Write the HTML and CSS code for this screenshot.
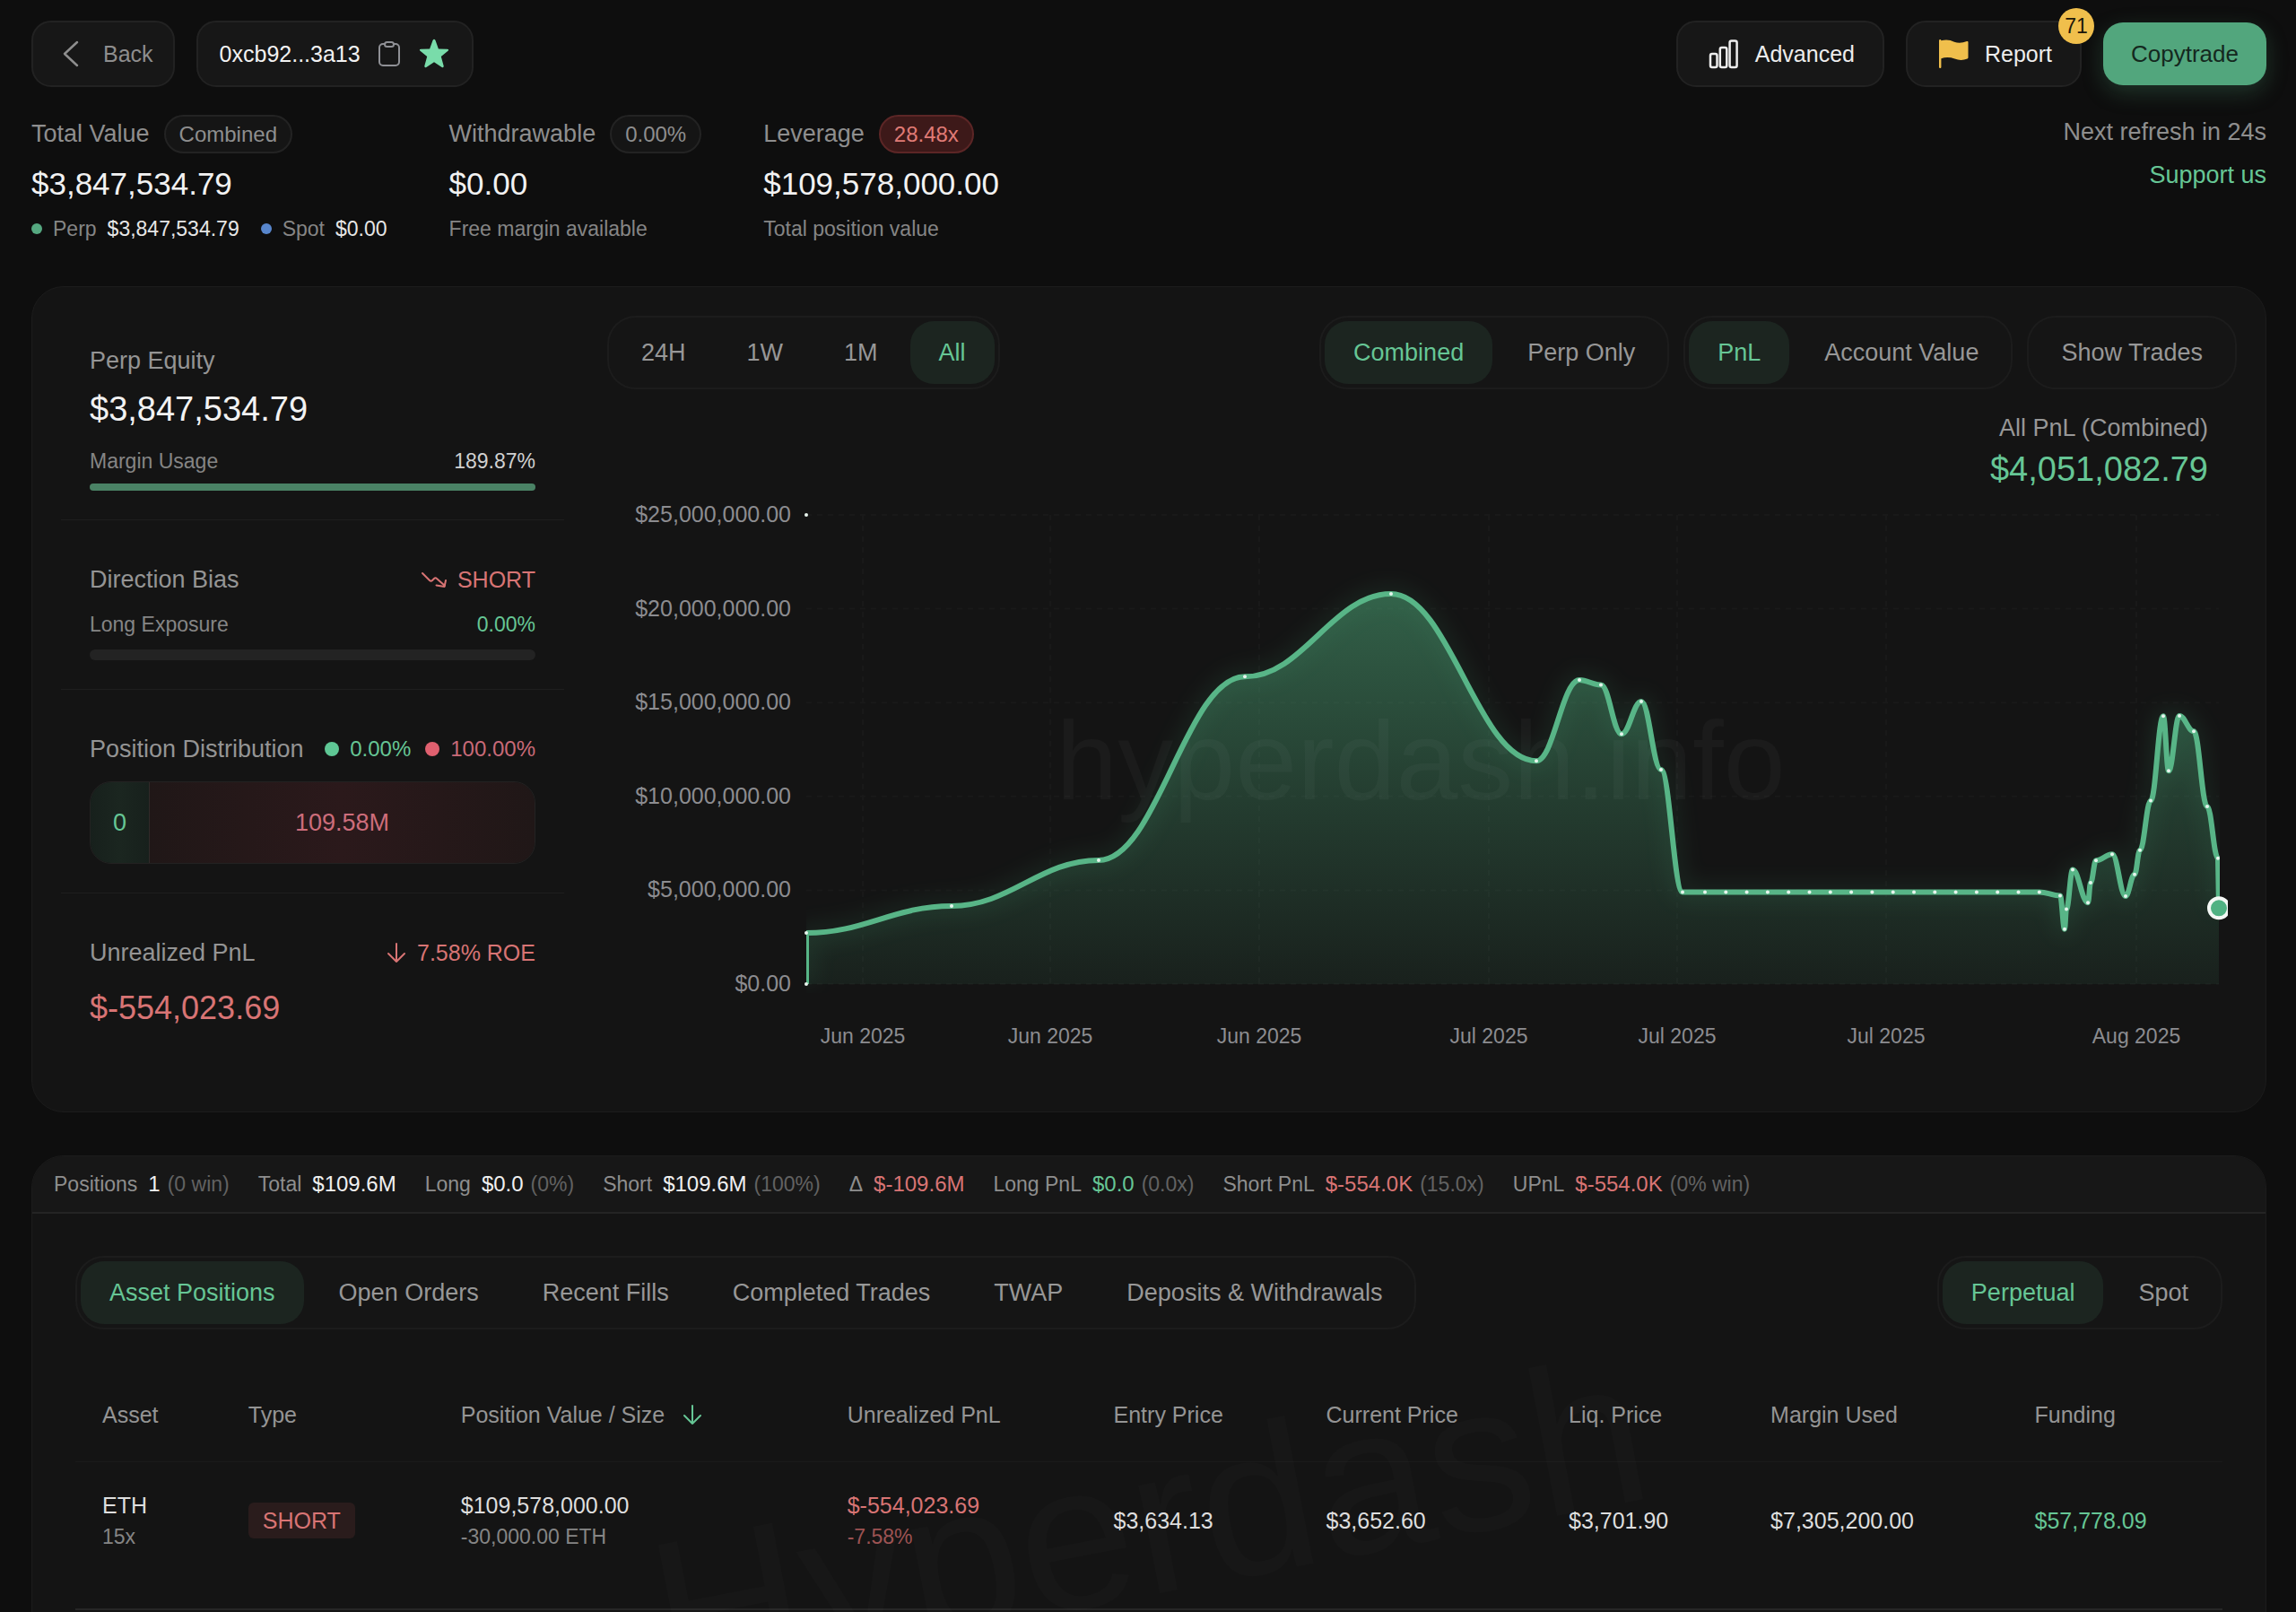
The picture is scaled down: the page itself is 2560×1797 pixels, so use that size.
FILE: index.html
```html
<!DOCTYPE html>
<html lang="en">

<head>
    <meta charset="UTF-8">
    <meta name="viewport" content="width=device-width, initial-scale=1.0">
    <title>Trader 0xcb92...3a13</title>
    <link rel="stylesheet" href="styles.css">
</head>

<body>
    <header class="topbar">
        <div class="topbar-group">
            <button type="button" class="btn btn-back">
                <svg class="icon-32" viewBox="0 0 32 32" fill="none" stroke="currentColor" stroke-width="2.5" stroke-linecap="round" stroke-linejoin="round"><path d="M23 3 9 16l14 13" /></svg>
                Back
            </button>
            <div class="btn address">
                <span>0xcb92...3a13</span>
                <button type="button" class="icon-btn" aria-label="Copy address">
                    <svg class="icon-28" viewBox="0 0 28 28" fill="none" stroke="#8f9095" stroke-width="2"><rect x="3" y="3" width="22" height="24" rx="4" /><rect x="9" y="1" width="10" height="5" rx="2.5" fill="#181818" /></svg>
                </button>
                <button type="button" class="icon-btn" aria-label="Favorite">
                    <svg class="icon-36" viewBox="0 0 36 36" fill="#79dcaa"><path d="M16.500 2.900 L13.100 12.500 L3.200 12.800 Q1 13 2.500 14.700 L10.200 20.900 L7.300 31.600 Q7.200 34 9.300 33 L18 27.200 L26.700 33 Q28.800 34 28.700 31.600 L25.800 20.900 L33.500 14.700 Q35 13 32.800 12.800 L22.900 12.500 L19.500 2.900 Q18 .5 16.500 2.900Z" /></svg>
                </button>
            </div>
        </div>
        <div class="topbar-group">
            <button type="button" class="btn btn-action">
                <svg class="icon-34" viewBox="0 0 34 34" fill="none" stroke="currentColor" stroke-width="2.5"><rect x="2" y="17" width="7.500" height="15" rx="2" /><rect x="12.800" y="10" width="7.500" height="22" rx="2" /><rect x="23.600" y="2.500" width="8" height="29.500" rx="2" /></svg>
                Advanced
            </button>
            <button type="button" class="btn btn-action btn-report">
                <svg class="icon-34" viewBox="0 0 34 34" fill="#f0bf4c"><path d="M1 2.200Q1 1 2.200 1T3.400 2.300Q11 0 18 3.800 25 5.800 32 3 33.500 2.600 33.500 4v17q0 1-1 1.600-7 2.800-14 0Q10.500 19.800 3.400 22.300V32q0 1-1.200 1T1 32Z" /></svg>
                Report
                <span class="badge">71</span>
            </button>
            <button type="button" class="btn-copy">Copytrade</button>
        </div>
    </header>

    <section class="summary">
        <div class="stat">
            <div class="stat-label">Total Value <span class="pill">Combined</span></div>
            <div class="stat-value">$3,847,534.79</div>
            <div class="stat-sub split">
                <span class="key"><i class="dot dot-green"></i>Perp <b>$3,847,534.79</b></span>
                <span class="key"><i class="dot dot-blue"></i>Spot <b>$0.00</b></span>
            </div>
        </div>
        <div class="stat">
            <div class="stat-label">Withdrawable <span class="pill">0.00%</span></div>
            <div class="stat-value">$0.00</div>
            <div class="stat-sub">Free margin available</div>
        </div>
        <div class="stat">
            <div class="stat-label">Leverage <span class="pill pill-red">28.48x</span></div>
            <div class="stat-value">$109,578,000.00</div>
            <div class="stat-sub">Total position value</div>
        </div>
        <div class="refresh">
            <span>Next refresh in 24s</span>
            <a href="#support">Support us</a>
        </div>
    </section>

    <section class="card overview">
        <aside class="side">
            <div class="side-block">
                <div class="side-title">Perp Equity</div>
                <div class="side-value">$3,847,534.79</div>
                <div class="side-row row-usage"><span>Margin Usage</span><span class="light">189.87%</span></div>
                <div class="bar bar-thin"><div class="bar-fill" style="width: 100%"></div></div>
            </div>
            <div class="side-block">
                <div class="side-title">Direction Bias
                    <span class="side-tag red">
                        <svg class="icon-28" viewBox="0 0 28 28" fill="none" stroke="currentColor" stroke-width="2" stroke-linecap="round" stroke-linejoin="round"><path d="M1 7l8 8q1.500 1.500 3 0l2-2q1.500-1.500 3 0l9 8M27 15l-1.500 7-9-1.500" /></svg>
                        SHORT
                    </span>
                </div>
                <div class="side-row row-exposure"><span>Long Exposure</span><span class="green">0.00%</span></div>
                <div class="bar"><div class="bar-fill" style="width: 0%"></div></div>
            </div>
            <div class="side-block">
                <div class="side-title">Position Distribution
                    <span class="legend">
                        <span class="key green"><i class="dot dot-lg dot-mint"></i>0.00%</span>
                        <span class="key rose"><i class="dot dot-lg dot-rose"></i>100.00%</span>
                    </span>
                </div>
                <div class="distribution">
                    <div class="dist-long">0</div>
                    <div class="dist-short">109.58M</div>
                </div>
            </div>
            <div class="side-block">
                <div class="side-title">Unrealized PnL
                    <span class="side-tag red">
                        <svg class="icon-22" viewBox="0 0 22 24" fill="none" stroke="currentColor" stroke-width="2" stroke-linecap="round" stroke-linejoin="round"><path d="M11 2v20M2 13l9 9 9-9" /></svg>
                        7.58% ROE
                    </span>
                </div>
                <div class="side-pnl red">$-554,023.69</div>
            </div>
        </aside>

        <div class="chart">
            <div class="chart-head">
                <div class="tabs tabs-range">
                    <button type="button">24H</button>
                    <button type="button">1W</button>
                    <button type="button">1M</button>
                    <button type="button" class="active">All</button>
                </div>
                <div class="chart-filters">
                    <div class="tabs">
                        <button type="button" class="active">Combined</button>
                        <button type="button">Perp Only</button>
                    </div>
                    <div class="tabs">
                        <button type="button" class="active">PnL</button>
                        <button type="button">Account Value</button>
                    </div>
                    <div class="tabs">
                        <button type="button">Show Trades</button>
                    </div>
                </div>
            </div>
            <div class="chart-total">
                <div class="chart-total-label">All PnL (Combined)</div>
                <div class="chart-total-value">$4,051,082.79</div>
            </div>
            <svg class="chart-svg" id="pnl-chart" viewBox="0 0 1817 660">
                <defs>
                    <linearGradient id="area" gradientUnits="userSpaceOnUse" x1="0" y1="116" x2="0" y2="550">
                        <stop offset="0" stop-color="#52b280" stop-opacity=".48" />
                        <stop offset=".5" stop-color="#52b280" stop-opacity=".27" />
                        <stop offset="1" stop-color="#52b280" stop-opacity=".08" />
                    </linearGradient>
                    <filter id="glow" x="-5%" y="-10%" width="110%" height="120%">
                        <feGaussianBlur stdDeviation="12" />
                    </filter>
                    <clipPath id="plot"><rect x="222" y="20" width="1576" height="540" /></clipPath>
                    <clipPath id="frame"><rect x="0" y="0" width="1807" height="660" /></clipPath>
                </defs>
                <g id="grid" class="grid"></g>
                <path id="pnl-area" fill="url(#area)" />
                <text class="chart-mark" x="907" y="344">hyperdash.info</text>
                <g clip-path="url(#plot)">
                    <path id="pnl-glow" class="glow" filter="url(#glow)" />
                    <path id="pnl-line" class="line" />
                </g>
                <g id="dots" class="dots"></g>
                <g clip-path="url(#frame)"><circle id="current" class="current" r="11" /></g>
                <g id="axis-y" class="axis axis-y"></g>
                <g id="axis-x" class="axis axis-x"></g>
            </svg>
        </div>
    </section>

    <section class="card positions">
        <div class="watermark" aria-hidden="true">Hyperdash</div>
        <div class="totals">
            <span class="total">Positions <b>1</b><small>(0 win)</small></span>
            <span class="total">Total <b>$109.6M</b></span>
            <span class="total">Long <b>$0.0</b><small>(0%)</small></span>
            <span class="total">Short <b>$109.6M</b><small>(100%)</small></span>
            <span class="total">Δ <b class="red">$-109.6M</b></span>
            <span class="total">Long PnL <b class="green">$0.0</b><small>(0.0x)</small></span>
            <span class="total">Short PnL <b class="red">$-554.0K</b><small>(15.0x)</small></span>
            <span class="total">UPnL <b class="red">$-554.0K</b><small>(0% win)</small></span>
        </div>
        <div class="positions-body">
            <div class="positions-head">
                <div class="tabs">
                    <button type="button" class="active">Asset Positions</button>
                    <button type="button">Open Orders</button>
                    <button type="button">Recent Fills</button>
                    <button type="button">Completed Trades</button>
                    <button type="button">TWAP</button>
                    <button type="button">Deposits &amp; Withdrawals</button>
                </div>
                <div class="tabs">
                    <button type="button" class="active">Perpetual</button>
                    <button type="button">Spot</button>
                </div>
            </div>
            <table class="table">
                <colgroup>
                    <col class="col-asset"><col class="col-type"><col class="col-size"><col class="col-upnl"><col class="col-entry"><col class="col-current"><col class="col-liq"><col class="col-margin"><col class="col-funding">
                </colgroup>
                <thead>
                    <tr>
                        <th>Asset</th>
                        <th>Type</th>
                        <th>
                            <span class="sorted">Position Value / Size
                                <svg class="icon-22 green" viewBox="0 0 22 24" fill="none" stroke="currentColor" stroke-width="2" stroke-linecap="round" stroke-linejoin="round"><path d="M11 2v20M2 13l9 9 9-9" /></svg>
                            </span>
                        </th>
                        <th>Unrealized PnL</th>
                        <th>Entry Price</th>
                        <th>Current Price</th>
                        <th>Liq. Price</th>
                        <th>Margin Used</th>
                        <th>Funding</th>
                    </tr>
                </thead>
                <tbody>
                    <tr>
                        <td><div class="cell-main">ETH</div><div class="cell-sub">15x</div></td>
                        <td><span class="tag-short">SHORT</span></td>
                        <td><div class="cell-main">$109,578,000.00</div><div class="cell-sub">-30,000.00 ETH</div></td>
                        <td><div class="cell-main red">$-554,023.69</div><div class="cell-sub dark-red">-7.58%</div></td>
                        <td>$3,634.13</td>
                        <td>$3,652.60</td>
                        <td>$3,701.90</td>
                        <td>$7,305,200.00</td>
                        <td class="green">$57,778.09</td>
                    </tr>
                </tbody>
            </table>
            <div class="table-footer"></div>
        </div>
    </section>

    <script src="chart.js"></script>
</body>

</html>
```
FILE: styles.css
```css
* {
    box-sizing: border-box;
}

body {
    margin: 0;
    padding: 23px 33px 0 35px;
    height: 100vh;
    overflow: hidden;
    background-color: #0e0e0e;
    color: #ededed;
    font-family: "Liberation Sans", Arial, sans-serif;
    font-size: 25px;
}

button {
    font-family: inherit;
    font-size: 25px;
    color: inherit;
    background: none;
    border: none;
    padding: 0;
    cursor: pointer;
}

b,
i,
small {
    font-weight: normal;
    font-style: normal;
    font-size: inherit;
}

svg {
    display: block;
    flex-shrink: 0;
}

.icon-22 { width: 22px; height: 24px; }
.icon-28 { width: 28px; height: 28px; }
.icon-32 { width: 32px; height: 32px; }
.icon-34 { width: 34px; height: 34px; }
.icon-36 { width: 36px; height: 36px; }

.green { color: #66c695; }
.red { color: #d87474; }
.rose { color: #c96a78; }
.dark-red { color: #9c5252; }
.light { color: #d0d0d0; }

/* top bar */
.topbar,
.topbar-group {
    display: flex;
    align-items: center;
    justify-content: space-between;
    gap: 24px;
}

.btn {
    display: flex;
    align-items: center;
    height: 74px;
    border: 2px solid #222;
    border-radius: 22px;
    background-color: #171717;
    white-space: nowrap;
}

.btn-back {
    gap: 20px;
    padding: 0 22px 0 26px;
    color: #8e8e8e;
}

.address {
    gap: 18px;
    padding: 0 24px;
    color: #f2f2f2;
}

.btn-action {
    gap: 18px;
    padding: 0 31px 0 34px;
}

.btn-report {
    position: relative;
}

.badge {
    position: absolute;
    top: -16px;
    right: -16px;
    width: 40px;
    height: 40px;
    border-radius: 50%;
    background-color: #f0bf4c;
    color: #1c1608;
    font-size: 23px;
    line-height: 40px;
    text-align: center;
}

.btn-copy {
    height: 70px;
    padding: 0 31px;
    border-radius: 22px;
    background-color: #52a67d;
    color: #14281e;
    font-size: 26px;
    box-shadow: 0 8px 24px rgba(82, 166, 125, 0.25);
}

/* summary */
.summary {
    display: flex;
    align-items: flex-start;
    gap: 69px;
    margin-top: 31px;
}

.stat {
    display: flex;
    flex-direction: column;
    gap: 15px;
    white-space: nowrap;
}

.stat-label {
    display: flex;
    align-items: center;
    gap: 16px;
    color: #8e8e8e;
    font-size: 27px;
}

.pill {
    height: 43px;
    padding: 0 15px;
    border: 2px solid #232323;
    border-radius: 22px;
    background-color: #151515;
    font-size: 24px;
    line-height: 39px;
}

.pill-red {
    border-color: #5c2626;
    background-color: #3d1919;
    color: #e07b76;
}

.stat-value {
    font-size: 35px;
    line-height: 38px;
    color: #f2f2f2;
}

.stat-sub {
    color: #858585;
    font-size: 23px;
    line-height: 32px;
}

.stat-sub b {
    color: #e6e6e6;
}

.split {
    display: flex;
    gap: 24px;
}

.key {
    display: flex;
    align-items: center;
    gap: 12px;
}

.dot {
    width: 12px;
    height: 12px;
    border-radius: 50%;
}

.dot-lg {
    width: 16px;
    height: 16px;
}

.dot-green { background-color: #55a880; }
.dot-blue { background-color: #5886cc; }
.dot-mint { background-color: #5fc795; }
.dot-rose { background-color: #e0606f; }

.refresh {
    display: flex;
    flex-direction: column;
    align-items: flex-end;
    gap: 10px;
    margin-left: auto;
    color: #8e8e8e;
    font-size: 27px;
    line-height: 38px;
}

.refresh a {
    color: #66c695;
    text-decoration: none;
}

/* cards */
.card {
    margin-top: 48px;
    border: 1px solid #1c1c1c;
    border-radius: 36px;
    background-color: #141414;
}

.overview {
    display: flex;
    gap: 48px;
    padding: 32px;
}

.side {
    display: flex;
    flex-direction: column;
    flex: 0 0 561px;
    gap: 16px;
}

.side-block {
    padding: 32px;
    border-bottom: 1px solid #1e1e1e;
}

.side-block:last-child {
    border-bottom: none;
}

.side-title {
    display: flex;
    align-items: center;
    justify-content: space-between;
    color: #949494;
    font-size: 27px;
    line-height: 36px;
    white-space: nowrap;
}

.side-tag {
    display: flex;
    align-items: center;
    gap: 12px;
    font-size: 25px;
}

.side-value {
    margin-top: 12px;
    font-size: 38px;
    line-height: 48px;
    color: #f2f2f2;
}

.side-pnl {
    margin-top: 20px;
    font-size: 36px;
    line-height: 48px;
}

.side-row {
    display: flex;
    justify-content: space-between;
    color: #858585;
    font-size: 23px;
    line-height: 28px;
}

.row-usage {
    margin: 20px 0 11px;
}

.row-exposure {
    margin: 18px 0 14px;
}

.bar {
    height: 12px;
    border-radius: 6px;
    background-color: #232323;
    overflow: hidden;
}

.bar-thin {
    height: 8px;
}

.bar-fill {
    height: 100%;
    background-color: #4a8265;
}

.legend {
    display: flex;
    gap: 16px;
    font-size: 24px;
}

.distribution {
    display: flex;
    height: 92px;
    margin-top: 18px;
    border: 1px solid #232222;
    border-radius: 24px;
    overflow: hidden;
    font-size: 27px;
    line-height: 90px;
    text-align: center;
}

.dist-long {
    flex: 0 0 66px;
    border-right: 1px solid #302a29;
    background: linear-gradient(90deg, #17201c, #1b2620, #17201c);
    color: #66c695;
}

.dist-short {
    flex: 1;
    background: linear-gradient(90deg, #201717, #2b191b, #201717);
    color: #cd6d7b;
}

/* tabs */
.tabs {
    display: flex;
    gap: 7px;
    padding: 4px;
    border: 2px solid #1c1c1c;
    border-radius: 32px;
    background-color: #151515;
}

.tabs-range {
    gap: 4px;
}

.tabs button {
    height: 70px;
    padding: 0 32px;
    border-radius: 26px;
    color: #979797;
    font-size: 27px;
    white-space: nowrap;
}

.tabs .active {
    background-color: #1c2520;
    color: #66c695;
}

/* chart */
.chart {
    flex: 1;
    min-width: 0;
}

.chart-head,
.positions-head {
    display: flex;
    justify-content: space-between;
}

.chart-filters {
    display: flex;
    gap: 16px;
}

.chart-total {
    margin-top: 25px;
    padding-right: 32px;
    text-align: right;
}

.chart-total-label {
    color: #979797;
    font-size: 27px;
    line-height: 36px;
}

.chart-total-value {
    margin-top: 4px;
    color: #66c695;
    font-size: 38px;
    line-height: 48px;
}

.chart-svg {
    width: 100%;
    height: auto;
}

.grid line {
    stroke: #191919;
    stroke-width: 2;
    stroke-dasharray: 6 6;
}

.line {
    fill: none;
    stroke: #58b587;
    stroke-width: 6;
    stroke-linejoin: round;
}

.glow {
    fill: none;
    stroke: #3f8a66;
    stroke-width: 14;
    opacity: 0.2;
}

.dots {
    fill: #e8f5ee;
}

.current {
    fill: #50b283;
    stroke: #f4f8f5;
    stroke-width: 4;
}

.axis {
    fill: #8c8c90;
    font-size: 25px;
}

.axis-y {
    text-anchor: end;
}

.axis-x {
    font-size: 23px;
    text-anchor: middle;
}

.chart-mark {
    fill: rgba(255, 255, 255, 0.03);
    font-size: 124px;
    text-anchor: middle;
}

/* positions */
.positions {
    position: relative;
    border-radius: 36px 36px 0 0;
    overflow: hidden;
}

.watermark {
    position: absolute;
    top: 408px;
    left: 50%;
    color: rgba(255, 255, 255, 0.016);
    font-size: 232px;
    line-height: 1;
    transform: translate(-50%, -50%) rotate(-11deg);
    pointer-events: none;
}

.totals {
    display: flex;
    gap: 32px;
    padding: 0 24px;
    border-bottom: 2px solid #242424;
    background-color: #171717;
    color: #8e8e8e;
    font-size: 23px;
    line-height: 62px;
    white-space: nowrap;
}

.total {
    display: flex;
    gap: 8px;
}

.total b {
    margin-left: 4px;
    font-size: 24px;
}

.total b:not([class]) {
    color: #f0f0f0;
}

.total small {
    color: #626262;
}

.positions-body {
    padding: 47px 48px 0;
}

.table {
    width: 100%;
    margin-top: 44px;
    border-collapse: collapse;
    table-layout: fixed;
    text-align: left;
}

.col-asset { width: 6.8%; }
.col-type { width: 9.9%; }
.col-size { width: 18%; }
.col-upnl { width: 12.4%; }
.col-entry { width: 9.9%; }
.col-current { width: 11.3%; }
.col-liq { width: 9.4%; }
.col-margin { width: 12.3%; }
.col-funding { width: 10%; }

.table th,
.table td {
    padding: 0 0 0 30px;
    white-space: nowrap;
}

.table th {
    height: 103px;
    border-bottom: 1px solid #1a1a1a;
    color: #949494;
    font-weight: normal;
}

.table td {
    height: 132px;
    color: #dedede;
}

.table td.green {
    color: #66c695;
}

.sorted {
    display: flex;
    align-items: center;
    gap: 20px;
}

.cell-main {
    line-height: 36px;
}

.cell-sub {
    color: #858585;
    font-size: 23px;
    line-height: 34px;
}

.cell-main.red { color: #d87474; }
.cell-sub.dark-red { color: #9c5252; }

.tag-short {
    display: inline-block;
    padding: 0 16px;
    border-radius: 6px;
    background-color: #2a1c1c;
    color: #d87474;
    line-height: 40px;
}

.table-footer {
    height: 96px;
    margin-top: 32px;
    border-top: 2px solid #262626;
}
```
FILE: chart.js
```js
const SVG_NS = 'http://www.w3.org/2000/svg';
const PLOT = { left: 222, right: 1797, top: 27, bottom: 550, max: 25 };

// [x position, PnL in millions]
const points = [
    [222, 2.72], [384, 4.16], [548, 6.6], [711, 16.38], [874, 20.79], [1036, 11.89],
    [1084, 16.2], [1108, 15.94], [1131, 13.32], [1153, 15.06], [1175, 11.43], [1199, 4.9]
];
// no trades here, PnL stays flat
for (let i = 0; i < 17; i++) {
    points.push([1224 + i * 23.3, 4.9]);
}
points.push(
    [1620, 4.71], [1625, 2.93], [1627, 3.99], [1634, 6.09], [1651, 4.34], [1654, 5.4],
    [1660, 6.59], [1678, 6.92], [1693, 4.69], [1703, 5.84], [1709, 7.13], [1721, 9.77],
    [1735, 14.28], [1741, 11.36], [1753, 14.29], [1769, 13.47], [1784, 9.46], [1796, 6.71]
);
const current = [1797, 4.05];

const months = [
    [285, 'Jun 2025'], [494, 'Jun 2025'], [727, 'Jun 2025'], [983, 'Jul 2025'],
    [1193, 'Jul 2025'], [1426, 'Jul 2025'], [1705, 'Aug 2025']
];

function toY(value) {
    return PLOT.bottom - value / PLOT.max * (PLOT.bottom - PLOT.top);
}

function add(parentId, tag, attrs, text) {
    const el = document.createElementNS(SVG_NS, tag);
    for (const name in attrs) {
        el.setAttribute(name, attrs[name]);
    }
    if (text) {
        el.textContent = text;
    }
    document.getElementById(parentId).appendChild(el);
}

let curve = `${points[0][0]} ${toY(points[0][1])}`;
for (let i = 1; i < points.length; i++) {
    const [x0, v0] = points[i - 1];
    const [x1, v1] = points[i];
    const dx = (x1 - x0) * 0.4;
    curve += ` C${x0 + dx} ${toY(v0)} ${x1 - dx} ${toY(v1)} ${x1} ${toY(v1)}`;
}

const line = `M${PLOT.left} ${PLOT.bottom} L${curve} L${current[0]} ${toY(current[1])}`;
document.getElementById('pnl-line').setAttribute('d', line);
document.getElementById('pnl-glow').setAttribute('d', line);
document.getElementById('pnl-area').setAttribute('d', `${line} V${PLOT.bottom} Z`);

for (let v = 0; v <= PLOT.max; v += 5) {
    const label = '$' + (v * 1000000).toLocaleString('en-US', { minimumFractionDigits: 2 });
    add('grid', 'line', { x1: PLOT.left, x2: PLOT.right, y1: toY(v), y2: toY(v) });
    add('axis-y', 'text', { x: 205, y: toY(v) + 8 }, label);
}

months.forEach(([x, label]) => {
    add('grid', 'line', { x1: x, x2: x, y1: PLOT.top, y2: PLOT.bottom });
    add('axis-x', 'text', { x: x, y: 616 }, label);
});

[[222, 25], [222, 0], ...points].forEach(([x, v]) => {
    add('dots', 'circle', { cx: x, cy: toY(v), r: 2 });
});

const marker = document.getElementById('current');
marker.setAttribute('cx', current[0]);
marker.setAttribute('cy', toY(current[1]));
```
